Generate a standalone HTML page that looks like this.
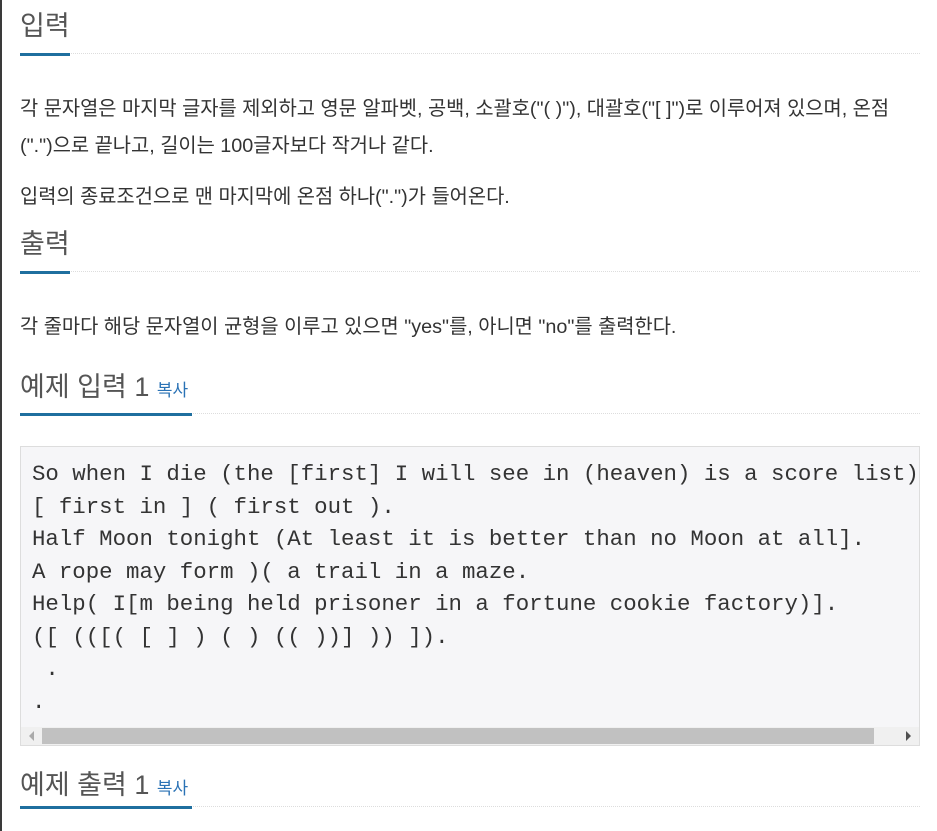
<!DOCTYPE html>
<html><head><meta charset="utf-8"><style>
body{margin:0;width:937px;height:831px;overflow:hidden;background:#fff;position:relative;font-family:"Liberation Sans","Noto Sans CJK KR",sans-serif;color:#333}
.bar{position:absolute;left:0;top:0;width:2px;height:831px;background:#3a3a3a}
.h{position:absolute;left:20px;font-size:27px;color:#555;white-space:nowrap}
.h small{font-size:17px;color:#2a72b5}
.ul{position:absolute;left:20px;height:3px;background:#1f6f9f}
.dl{position:absolute;left:20px;width:900px;border-top:1px dotted #ddd}
.p{position:absolute;left:20px;font-size:19.8px;white-space:nowrap;color:#333}
.code{position:absolute;left:20px;top:446px;width:898px;height:298px;background:#f6f6f8;border:1px solid #ddd;overflow:hidden}
.code pre{margin:0;position:absolute;left:11px;top:11px;font-family:"Liberation Mono",monospace;font-size:22.4px;line-height:32.5px;color:#333}
.sb{position:absolute;left:1px;top:727px;width:898px;height:18px;background:#f0f0f0}
</style></head><body>
<div class="bar"></div>
<div class="h" style="top:4px">입력</div>
<div class="dl" style="top:53px"></div><div class="ul" style="top:53px;width:50px"></div>
<div class="p" style="top:92px">각 문자열은 마지막 글자를 제외하고 영문 알파벳, 공백, 소괄호("( )"), 대괄호("[ ]")로 이루어져 있으며, 온점</div>
<div class="p" style="top:129px">(".")으로 끝나고, 길이는 100글자보다 작거나 같다.</div>
<div class="p" style="top:180px">입력의 종료조건으로 맨 마지막에 온점 하나(".")가 들어온다.</div>
<div class="h" style="top:222px">출력</div>
<div class="dl" style="top:271px"></div><div class="ul" style="top:271px;width:50px"></div>
<div class="p" style="top:310px">각 줄마다 해당 문자열이 균형을 이루고 있으면 "yes"를, 아니면 "no"를 출력한다.</div>
<div class="h" style="top:365px">예제 입력 1 <small>복사</small></div>
<div class="dl" style="top:413px"></div><div class="ul" style="top:413px;width:172px"></div>
<div class="code"><pre>So when I die (the [first] I will see in (heaven) is a score list).
[ first in ] ( first out ).
Half Moon tonight (At least it is better than no Moon at all].
A rope may form )( a trail in a maze.
Help( I[m being held prisoner in a fortune cookie factory)].
([ (([( [ ] ) ( ) (( ))] )) ]).
 .
.</pre></div>
<div class="sb" style="left:21px"></div>
<div style="position:absolute;left:42px;top:728px;width:832px;height:16px;background:#c1c1c1"></div>
<div style="position:absolute;left:29px;top:731px;width:0;height:0;border-top:5px solid transparent;border-bottom:5px solid transparent;border-right:5px solid #aaa"></div>
<div style="position:absolute;left:906px;top:731px;width:0;height:0;border-top:5px solid transparent;border-bottom:5px solid transparent;border-left:5px solid #505050"></div>
<div class="h" style="top:763px">예제 출력 1 <small>복사</small></div>
<div class="dl" style="top:806px"></div><div class="ul" style="top:806px;width:172px"></div>
</body></html>
